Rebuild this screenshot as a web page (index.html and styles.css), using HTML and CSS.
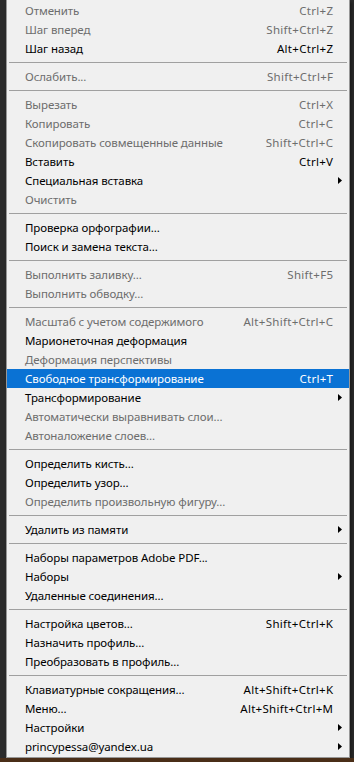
FILE: index.html
```html
<!DOCTYPE html>
<html lang="ru">
<head>
  <meta charset="UTF-8">
  <title>Редактирование</title>
  <meta name="viewport" content="width=device-width, initial-scale=1.0">
  <link rel="stylesheet" href="styles.css">
</head>
<body>

<div class="screen">
  <div class="menu">
    <div class="item off"><span class="label">Отменить</span><span class="key">Ctrl+Z</span></div>
    <div class="item off"><span class="label">Шаг вперед</span><span class="key">Shift+Ctrl+Z</span></div>
    <div class="item"><span class="label">Шаг назад</span><span class="key">Alt+Ctrl+Z</span></div>
    <div class="sep"></div>
    <div class="item off"><span class="label">Ослабить...</span><span class="key">Shift+Ctrl+F</span></div>
    <div class="sep"></div>
    <div class="item off"><span class="label">Вырезать</span><span class="key">Ctrl+X</span></div>
    <div class="item off"><span class="label">Копировать</span><span class="key">Ctrl+C</span></div>
    <div class="item off"><span class="label">Скопировать совмещенные данные</span><span class="key">Shift+Ctrl+C</span></div>
    <div class="item"><span class="label">Вставить</span><span class="key">Ctrl+V</span></div>
    <div class="item sub"><span class="label">Специальная вставка</span><span class="key"></span></div>
    <div class="item off"><span class="label">Очистить</span><span class="key"></span></div>
    <div class="sep"></div>
    <div class="item"><span class="label">Проверка орфографии...</span><span class="key"></span></div>
    <div class="item"><span class="label">Поиск и замена текста...</span><span class="key"></span></div>
    <div class="sep"></div>
    <div class="item off"><span class="label">Выполнить заливку...</span><span class="key">Shift+F5</span></div>
    <div class="item off"><span class="label">Выполнить обводку...</span><span class="key"></span></div>
    <div class="sep"></div>
    <div class="item off"><span class="label">Масштаб с учетом содержимого</span><span class="key">Alt+Shift+Ctrl+C</span></div>
    <div class="item"><span class="label">Марионеточная деформация</span><span class="key"></span></div>
    <div class="item off"><span class="label">Деформация перспективы</span><span class="key"></span></div>
    <div class="item active"><span class="label">Свободное трансформирование</span><span class="key">Ctrl+T</span></div>
    <div class="item sub"><span class="label">Трансформирование</span><span class="key"></span></div>
    <div class="item off"><span class="label">Автоматически выравнивать слои...</span><span class="key"></span></div>
    <div class="item off"><span class="label">Автоналожение слоев...</span><span class="key"></span></div>
    <div class="sep"></div>
    <div class="item"><span class="label">Определить кисть...</span><span class="key"></span></div>
    <div class="item"><span class="label">Определить узор...</span><span class="key"></span></div>
    <div class="item off"><span class="label">Определить произвольную фигуру...</span><span class="key"></span></div>
    <div class="sep"></div>
    <div class="item sub"><span class="label">Удалить из памяти</span><span class="key"></span></div>
    <div class="sep"></div>
    <div class="item"><span class="label">Наборы параметров Adobe PDF...</span><span class="key"></span></div>
    <div class="item sub"><span class="label">Наборы</span><span class="key"></span></div>
    <div class="item"><span class="label">Удаленные соединения...</span><span class="key"></span></div>
    <div class="sep"></div>
    <div class="item"><span class="label">Настройка цветов...</span><span class="key">Shift+Ctrl+K</span></div>
    <div class="item"><span class="label">Назначить профиль...</span><span class="key"></span></div>
    <div class="item"><span class="label">Преобразовать в профиль...</span><span class="key"></span></div>
    <div class="sep"></div>
    <div class="item"><span class="label">Клавиатурные сокращения...</span><span class="key">Alt+Shift+Ctrl+K</span></div>
    <div class="item"><span class="label">Меню...</span><span class="key">Alt+Shift+Ctrl+M</span></div>
    <div class="item sub"><span class="label">Настройки</span><span class="key"></span></div>
    <div class="item sub"><span class="label">princypessa@yandex.ua</span><span class="key"></span></div>
  </div>
  <div class="canvas"></div>
</div>

<script>
  // submenu arrows
  document.querySelectorAll('.item').forEach(item => {
    const arrow = document.createElement('span');
    arrow.className = 'arrow';
    if (item.classList.contains('sub')) {
      arrow.innerHTML = '<svg width="4" height="7" viewBox="0 0 4 7"><polygon points="0,0 4,3.5 0,7" fill="#000"/></svg>';
    }
    item.appendChild(arrow);
  });
</script>

</body>
</html>
```

FILE: styles.css
```css
* {
  margin: 0;
  padding: 0;
  box-sizing: border-box;
}

html, body {
  height: 100%;
  background: #2b2b2b;
  font-family: 'Noto Sans', 'Open Sans', sans-serif;
  font-size: 11.5px;
  letter-spacing: -0.1px;
  overflow: hidden;
}

.screen {
  display: flex;
  flex-direction: column;
  height: 100%;
}

.menu {
  flex-shrink: 0;
  margin-left: 6px;
  width: 344px;
  background: #f0f0f0;
  border: 1px solid #979797;
  border-top: none;
  padding: 1px 0 1px 0;
  box-shadow: 2px 2px 3px rgba(0, 0, 0, 0.4);
}

.item {
  display: grid;
  grid-template-columns: 1fr auto 16px;
  align-items: center;
  height: 19px;
  line-height: 19px;
  padding-left: 18px;
  color: #000;
  white-space: nowrap;
}

.item.off {
  color: #6d6d6d;
}

.item.active {
  background: #0a72d4;
  color: #fff;
}

.key {
  text-align: right;
  letter-spacing: 0.3px;
  margin-right: -0.3px;
}

.arrow {
  display: flex;
  align-items: center;
  padding-left: 5px;
  height: 19px;
}

.sep {
  height: 9px;
  padding: 4px 2px 0;
}

.sep::before {
  content: '';
  display: block;
  height: 1px;
  background: #a0a0a0;
}

.canvas {
  flex: 1;
  background: #4a2e18;
}
```
